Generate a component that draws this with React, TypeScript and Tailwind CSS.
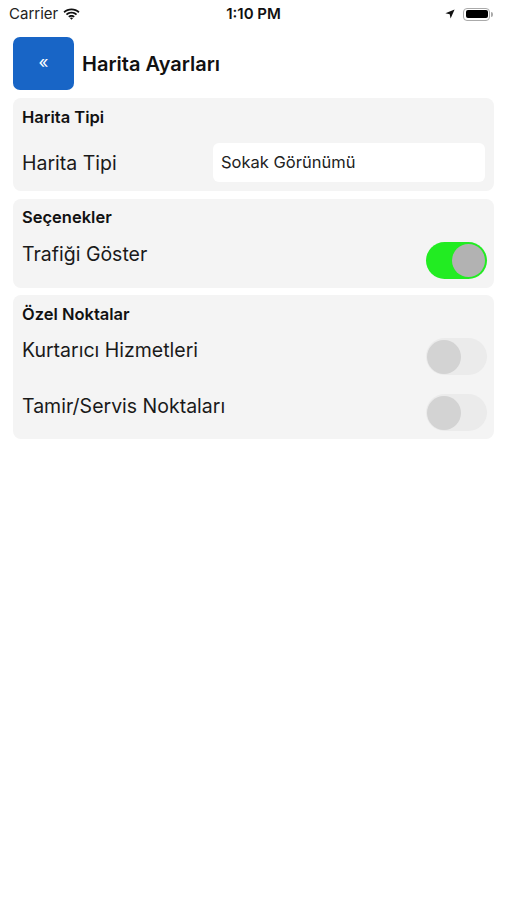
import React from "react";

function Toggle({ on }: { on: boolean }) {
  if (on) {
    return (
      <div className="w-[61px] h-[37px] rounded-full bg-[#22ec22] flex items-center justify-end pr-[2px] shrink-0">
        <div className="w-[33px] h-[33px] rounded-full bg-[#b2b2b2]" />
      </div>
    );
  }
  return (
    <div className="w-[61px] h-[37px] rounded-full bg-[#ebebeb] flex items-center justify-start pl-[1px] shrink-0">
      <div className="w-[34px] h-[34px] rounded-full bg-[#d3d3d3]" />
    </div>
  );
}

export default function App() {
  return (
    <div
      className="w-[507px] h-[900px] bg-white text-[#111] overflow-hidden"
      style={{ fontFamily: "Inter, 'Liberation Sans', sans-serif" }}
    >
      {/* Status bar */}
      <div className="h-[28px] flex items-center justify-between px-[9px] relative">
        <div className="flex items-center gap-[5px] text-[15px] text-[#222]">
          <span>Carrier</span>
          <svg width="17" height="12" viewBox="0 0 17 12">
            <path d="M8.5 2.2c2.6 0 5 1 6.8 2.7l1.2-1.3C14.4 1.6 11.6.4 8.5.4S2.6 1.6.5 3.6l1.2 1.3C3.5 3.2 5.9 2.2 8.5 2.2z" fill="#111" />
            <path d="M8.5 5.5c1.7 0 3.2.6 4.4 1.7l1.2-1.3C12.6 4.5 10.6 3.7 8.5 3.7S4.4 4.5 2.9 5.9l1.2 1.3c1.2-1.1 2.7-1.7 4.4-1.7z" fill="#111" />
            <path d="M8.5 8.8c.8 0 1.5.3 2 .8l1.3-1.3c-.9-.8-2-1.3-3.3-1.3s-2.4.5-3.3 1.3l1.3 1.3c.5-.5 1.2-.8 2-.8zM8.5 11.7l1.6-1.6c-.4-.4-1-.6-1.6-.6s-1.2.2-1.6.6z" fill="#111" />
          </svg>
        </div>
        <div className="absolute left-0 right-0 text-center text-[15px] font-semibold pointer-events-none">1:10 PM</div>
        <div className="flex items-center gap-[8px] pr-[5px]">
          <svg width="10" height="10" viewBox="0 0 10 10">
            <path d="M9.6.4L.4 4.3l4.3.9.9 4.4z" fill="#111" />
          </svg>
          <div className="flex items-center">
            <div className="w-[27px] h-[13px] rounded-[4px] border border-[#aaa] p-[1.5px]">
              <div className="w-full h-full rounded-[2px] bg-black" />
            </div>
            <div className="w-[2px] h-[5px] rounded-r bg-[#aaa] ml-[1px]" />
          </div>
        </div>
      </div>

      <div className="px-[13px]">
        {/* Header */}
        <div className="mt-[9px] flex items-center gap-[8px] h-[53px]">
          <div className="w-[61px] h-[53px] rounded-[7px] bg-[#1865c6] flex items-center justify-center text-white text-[17px] leading-none pb-[2px]">
            «
          </div>
          <div className="text-[20px] font-semibold text-[#111]">Harita Ayarları</div>
        </div>

        {/* Card 1 */}
        <div className="mt-[8px] rounded-[8px] bg-[#f4f4f4] px-[9px] pt-[9px] pb-[9px]">
          <div className="text-[16.5px] font-semibold leading-[20px]">Harita Tipi</div>
          <div className="mt-[16px] flex items-center">
            <div className="text-[19.5px] leading-[24px] w-[191px] text-[#1a1a1a]">Harita Tipi</div>
            <div className="flex-1 h-[39px] rounded-[6px] bg-white flex items-center px-[8px] text-[16.5px] text-[#222]">
              Sokak Görünümü
            </div>
          </div>
        </div>

        {/* Card 2 */}
        <div className="mt-[8px] rounded-[8px] bg-[#f4f4f4] pl-[9px] pr-[7px] pt-[8px] pb-[9px]">
          <div className="text-[16.5px] font-semibold leading-[20px]">Seçenekler</div>
          <div className="mt-[15px] flex items-start justify-between">
            <div className="text-[19.5px] leading-[24px] text-[#1a1a1a]">Trafiği Göster</div>
            <Toggle on />
          </div>
        </div>

        {/* Card 3 */}
        <div className="mt-[7px] rounded-[8px] bg-[#f4f4f4] pl-[9px] pr-[7px] pt-[9px] pb-[8px]">
          <div className="text-[16.5px] font-semibold leading-[20px]">Özel Noktalar</div>
          <div className="mt-[14px] flex items-start justify-between">
            <div className="text-[19.5px] leading-[24px] text-[#1a1a1a]">Kurtarıcı Hizmetleri</div>
            <Toggle on={false} />
          </div>
          <div className="mt-[19px] flex items-start justify-between">
            <div className="text-[19.5px] leading-[24px] text-[#1a1a1a]">Tamir/Servis Noktaları</div>
            <Toggle on={false} />
          </div>
        </div>
      </div>
    </div>
  );
}
